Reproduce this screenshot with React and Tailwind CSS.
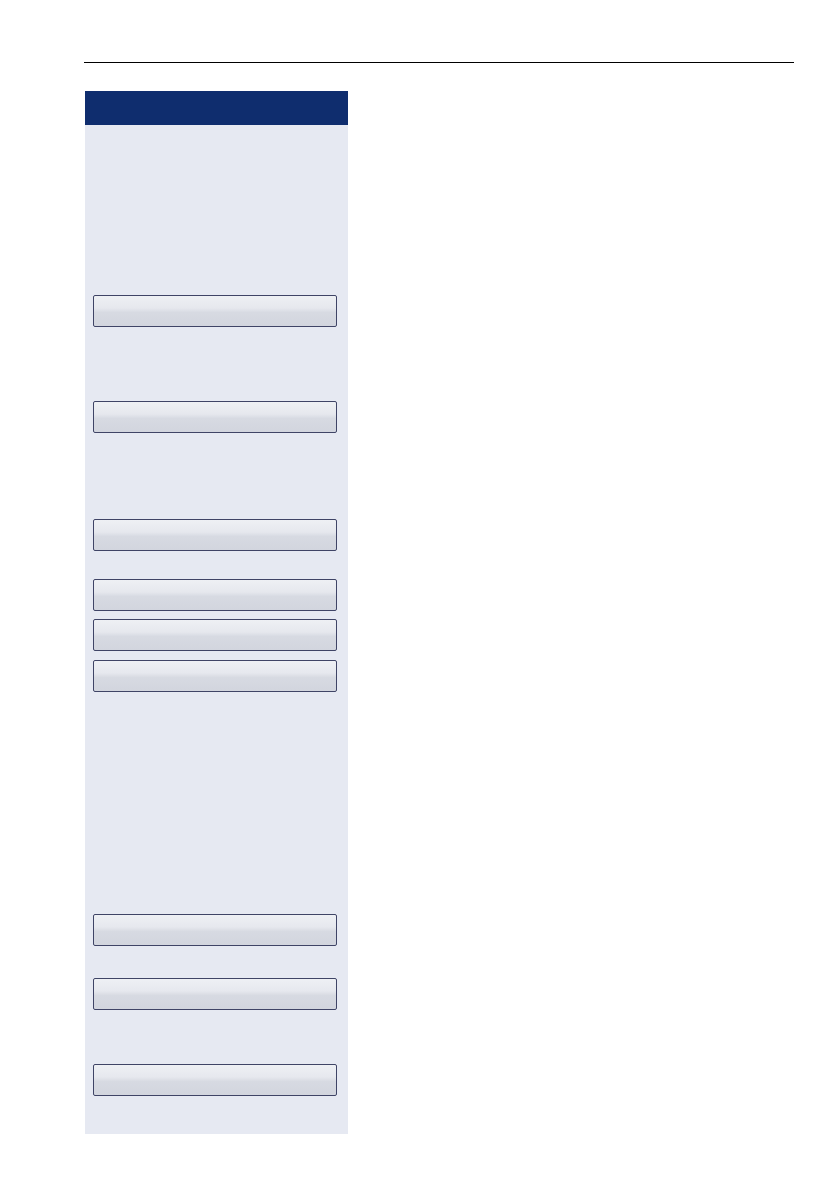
export default function App() {
  // top offsets of each button, in page px
  const tops = [295, 401, 519, 579, 619, 660, 914, 978, 1064];
  const btnH = 32;

  let prev = 125;
  const buttons = tops.map((t, i) => {
    const gap = t - prev;
    prev = t + btnH;
    return (
      <div
        key={i}
        className="ml-2 mr-[11px] h-[32px] rounded-[2px] border border-[#3f4466] bg-[linear-gradient(to_bottom,#eef0f4_0%,#e6e8ee_40%,#d7dae2_55%,#d2d5de_100%)]"
        style={{ marginTop: gap }}
      />
    );
  });

  return (
    <div className="w-[838px] h-[1192px] bg-white relative font-['Liberation_Sans',sans-serif]">
      <div className="pt-[62px] pl-[84px]">
        <div className="w-[710px] h-px bg-black" />
      </div>
      <div className="ml-[85px] mt-[28px] w-[263px] h-[1043px] bg-[#e6e9f2] flex flex-col">
        <div className="h-[34px] bg-[#0f2d6e] shrink-0" />
        {buttons}
      </div>
    </div>
  );
}
